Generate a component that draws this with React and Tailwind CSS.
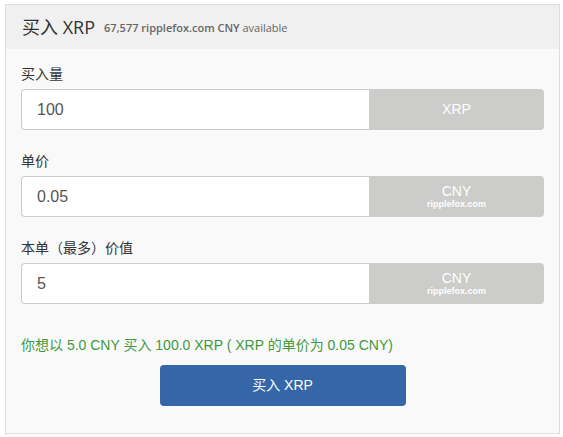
import React from "react";

const sans = { fontFamily: '"Liberation Sans", "Noto Sans CJK SC", sans-serif' };

const Field = ({ label, value, unit, issuer }) => (
  <div>
    <div className="h-5 mb-[5px] text-[14px] leading-5 text-[#333]">{label}</div>
    <div className="flex h-[41px]">
      <div className="flex-1 flex items-center pl-[15px] bg-white border border-[#cccccc] border-r-0 rounded-l-[4px] text-[16px] text-[#555]">
        {value}
      </div>
      <div className="w-[175px] flex flex-col items-center justify-center bg-[#cccccb] rounded-r-[4px] text-white">
        <span className="text-[14px] leading-[15px]">{unit}</span>
        {issuer && <span className="text-[9px] font-bold leading-[11px]">{issuer}</span>}
      </div>
    </div>
  </div>
);

const App = () => {
  return (
    <div className="w-[563px] h-[437px] bg-white pt-[4px] pl-[5px]" style={sans}>
      <div className="w-[555px] h-[430px] border border-[#dddddd] bg-[#f9f9f9]">
        {/* Header */}
        <div className="h-[44px] bg-[#f0f0f0] flex items-center pl-[16px] gap-[9px]">
          <span className="text-[18px] text-[#333]" style={{ fontFamily: '"Open Sans", "Noto Sans CJK SC", sans-serif' }}>买入 XRP</span>
          <span className="text-[11px] text-[#666] pt-[3px]" style={{ fontFamily: '"Open Sans", sans-serif' }}>
            <span className="font-semibold">67,577 ripplefox.com CNY</span> available
          </span>
        </div>

        {/* Form */}
        <div className="px-[15px] pt-[15px] flex flex-col gap-[21px]">
          <Field label="买入量" value="100" unit="XRP" />
          <Field label="单价" value="0.05" unit="CNY" issuer="ripplefox.com" />
          <Field label="本单（最多）价值" value="5" unit="CNY" issuer="ripplefox.com" />
        </div>

        <div className="px-[15px] mt-[31px] h-5 leading-5 text-[14px] text-[#3c9a3c]">
          你想以 5.0 CNY 买入 100.0 XRP ( XRP 的单价为 0.05 CNY)
        </div>

        <div className="flex justify-center mt-[10px]">
          <button className="w-[246px] h-[41px] rounded-[4px] bg-[#3567a8] text-white text-[14px]">
            买入 XRP
          </button>
        </div>
      </div>
    </div>
  );
};

export default App;
